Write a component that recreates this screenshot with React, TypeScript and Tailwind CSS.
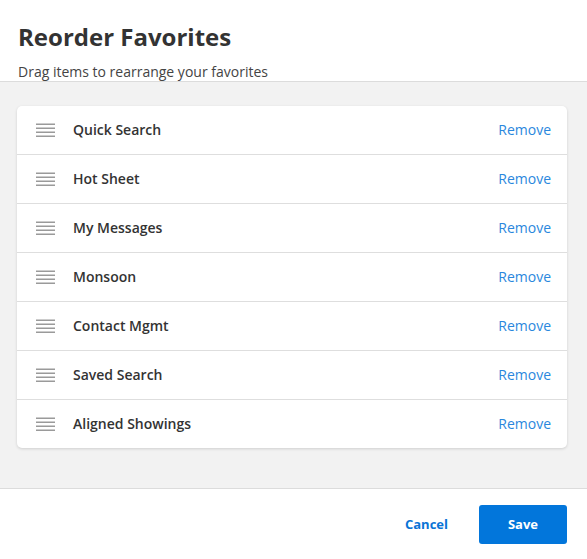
import { useState } from "react";

const ITEMS = [
  "Quick Search",
  "Hot Sheet",
  "My Messages",
  "Monsoon",
  "Contact Mgmt",
  "Saved Search",
  "Aligned Showings",
];

function DragHandle() {
  return (
    <svg width="19" height="14" viewBox="0 0 19 14" className="shrink-0">
      <rect x="0" y="0.5" width="19" height="1.5" fill="#9a9a9a" />
      <rect x="0" y="4.5" width="19" height="1.5" fill="#9a9a9a" />
      <rect x="0" y="8.5" width="19" height="1.5" fill="#9a9a9a" />
      <rect x="0" y="12.5" width="19" height="1.5" fill="#9a9a9a" />
    </svg>
  );
}

export default function App() {
  const [items, setItems] = useState(ITEMS);

  return (
    <div
      className="w-[587px] h-[559px] bg-white flex flex-col text-[#333]"
      style={{ fontFamily: '"Open Sans", "Noto Sans", sans-serif' }}
    >
      {/* HEADER */}
      <div className="px-[18px] pt-[21px] border-b border-[#dcdcdc]">
        <h2 className="text-[24px] leading-[32px] font-bold text-[#333]">
          Reorder Favorites
        </h2>
        <p className="mt-[10px] text-[14px] leading-[18px] text-[#444]">
          Drag items to rearrange your favorites
        </p>
      </div>

      {/* LIST */}
      <div className="bg-[#f2f2f2] pl-[17px] pr-5 pt-6 pb-10">
        <div className="bg-white rounded-[5px] shadow-[0_1px_3px_rgba(0,0,0,0.15)]">
          {items.map((name, i) => (
            <div
              key={name}
              className={
                i < items.length - 1
                  ? "flex items-center h-[49px] pb-[1px] border-b border-[#dedede] pl-[19px] pr-4"
                  : "flex items-center h-[48px] pb-[1px] pl-[19px] pr-4"
              }
            >
              <DragHandle />
              <span className="ml-[18px] flex-1 text-[14px] font-semibold text-[#333]">
                {name}
              </span>
              <button
                className="text-[14px] text-[#2a87dd]"
                onClick={() => setItems(items.filter((n) => n !== name))}
              >
                Remove
              </button>
            </div>
          ))}
        </div>
      </div>

      {/* FOOTER */}
      <div className="flex-1 border-t border-[#dcdcdc] flex items-start justify-end pt-4 pr-5 gap-[15px]">
        <button className="h-[39px] px-4 text-[13px] font-bold text-[#0a74d6]">
          Cancel
        </button>
        <button className="h-[39px] w-[88px] rounded-[3px] bg-[#0276db] text-white text-[13px] font-bold">
          Save
        </button>
      </div>
    </div>
  );
}
